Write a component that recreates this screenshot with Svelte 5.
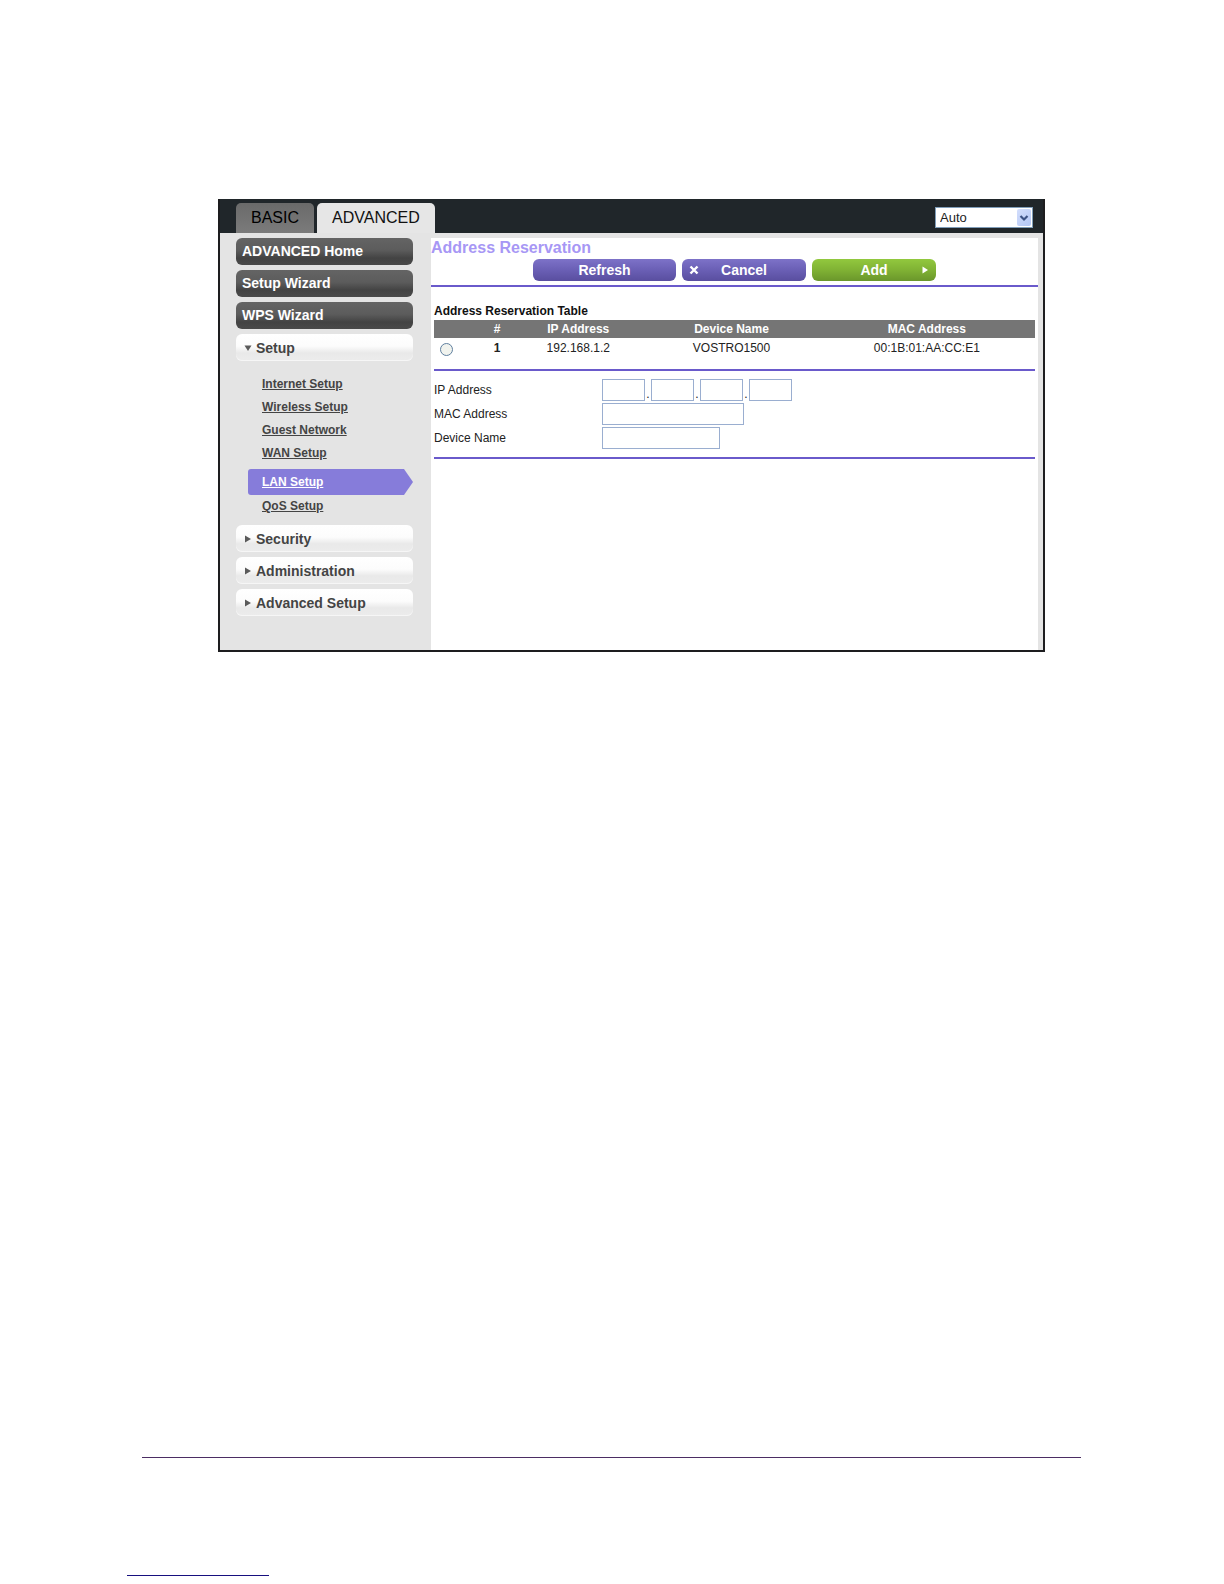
<script>
  const quickLinks = ['ADVANCED Home', 'Setup Wizard', 'WPS Wizard'];
  const setupLinks = ['Internet Setup', 'Wireless Setup', 'Guest Network', 'WAN Setup', 'LAN Setup', 'QoS Setup'];
  const sections = ['Security', 'Administration', 'Advanced Setup'];
  const rows = [{ id: 1, ip: '192.168.1.2', device: 'VOSTRO1500', mac: '00:1B:01:AA:CC:E1' }];
  const octets = [1, 2, 3, 4];
  let current = $state('LAN Setup');
  let setupOpen = $state(true);
</script>

<div class="page">
  <div class="window">
    <header class="topbar">
      <nav class="tabs" aria-label="Mode">
        <button type="button" class="tab">BASIC</button>
        <button type="button" class="tab active">ADVANCED</button>
      </nav>
      <div class="language">
        <select aria-label="Language">
          <option>Auto</option>
        </select>
        <span class="drop">
          <svg width="10" height="8" viewBox="0 0 10 8" aria-hidden="true"><path d="M1.5 2 5 5.500 8.500 2" fill="none" stroke="#3d5385" stroke-width="2.2" /></svg>
        </span>
      </div>
    </header>

    <div class="body">
      <aside class="sidebar">
        {#each quickLinks as label}
          <button type="button" class="nav dark">{label}</button>
        {/each}
        <button type="button" class="nav light" aria-expanded={setupOpen} onclick={() => (setupOpen = !setupOpen)}>
          <svg width="8" height="8" viewBox="0 0 8 8" aria-hidden="true"><path d={setupOpen ? 'M0.5 1.500h7L4 7z' : 'M1 0.500v7L7 4z'} fill="#5a5a5a" /></svg>
          Setup
        </button>
        {#if setupOpen}
          <ul class="sub">
            {#each setupLinks as label}
              <li class:current={label === current}>
                <a href="#setup" onclick={() => (current = label)}>{label}</a>
              </li>
            {/each}
          </ul>
        {/if}
        {#each sections as label}
          <button type="button" class="nav light">
            <svg width="8" height="8" viewBox="0 0 8 8" aria-hidden="true"><path d="M1 0.500v7L7 4z" fill="#5a5a5a" /></svg>
            {label}
          </button>
        {/each}
      </aside>

      <main class="content">
        <h1>Address Reservation</h1>
        <div class="actions">
          <button type="button" class="action wide">Refresh</button>
          <button type="button" class="action">
            <svg class="cross" width="10" height="10" viewBox="0 0 10 10" aria-hidden="true"><path d="M1.500 1.500l7 7M8.500 1.500l-7 7" stroke="#fff" stroke-width="2.4" /></svg>
            Cancel
          </button>
          <button type="button" class="action green">
            Add
            <svg class="play" width="6" height="8" viewBox="0 0 6 8" aria-hidden="true"><path d="M0.500 0.500v7L6 4z" fill="#fff" /></svg>
          </button>
        </div>

        <form class="form">
          <table>
            <caption>Address Reservation Table</caption>
            <thead>
              <tr>
                <th class="pick"></th>
                <th class="num">#</th>
                <th class="ip">IP Address</th>
                <th class="device">Device Name</th>
                <th>MAC Address</th>
              </tr>
            </thead>
            <tbody>
              {#each rows as row}
                <tr>
                  <td class="pick"><input type="radio" name="entry" aria-label="Select {row.device}" /></td>
                  <td><b>{row.id}</b></td>
                  <td>{row.ip}</td>
                  <td>{row.device}</td>
                  <td>{row.mac}</td>
                </tr>
              {/each}
            </tbody>
          </table>

          <div class="fields">
            <div class="field">
              <label for="ip1">IP Address</label>
              <div class="octets">
                {#each octets as n}
                  <input id="ip{n}" type="text" maxlength="3" aria-label={n > 1 ? `IP Address part ${n}` : undefined} />
                  {#if n < octets.length}<span>.</span>{/if}
                {/each}
              </div>
            </div>
            <div class="field">
              <label for="mac">MAC Address</label>
              <input id="mac" class="mac" type="text" />
            </div>
            <div class="field">
              <label for="device">Device Name</label>
              <input id="device" class="name" type="text" />
            </div>
          </div>
        </form>
      </main>
    </div>
  </div>

  <footer>
    <hr />
    <a href="#top" class="source" aria-label="Source"></a>
  </footer>
</div>

<style>
  :global(body) {
    margin: 0;
    background: #fff;
  }

  .page {
    box-sizing: border-box;
    min-height: 100vh;
    display: flex;
    flex-direction: column;
    justify-content: space-between;
    padding: 199px 0 8px;
    font-family: 'Liberation Sans', Arial, sans-serif;
    font-size: 12px;
    color: #222;
  }

  button,
  input,
  select {
    box-sizing: border-box;
    font-family: inherit;
    margin: 0;
  }

  .window {
    margin: 0 179px 0 218px;
    border: 2px solid #1d1d1f;
    border-top: 0;
    background: #e4e4e4;
  }

  .topbar {
    display: flex;
    justify-content: space-between;
    align-items: flex-end;
    height: 34px;
    padding: 0 10px 0 16px;
    background: #20262a;
  }

  .tabs {
    display: flex;
    gap: 3px;
  }

  .tab {
    height: 30px;
    padding: 0 15px;
    border: 0;
    border-radius: 5px 5px 0 0;
    background: linear-gradient(#6a6a6a, #7b7b7b);
    font-size: 16px;
    color: #000;
  }

  .tab.active {
    background: #e6e6e6;
    color: #111;
  }

  .language {
    position: relative;
    margin-bottom: 5px;
  }

  .language select {
    display: block;
    appearance: none;
    width: 98px;
    height: 21px;
    padding: 0 4px;
    border: 1px solid #7f9db9;
    border-radius: 0;
    background: #fff;
    font-size: 13px;
    color: #222;
  }

  .drop {
    position: absolute;
    top: 2px;
    right: 2px;
    bottom: 2px;
    width: 14px;
    display: grid;
    place-items: center;
    border-radius: 2px;
    background: linear-gradient(135deg, #d3defc, #b3c6f5);
    pointer-events: none;
  }

  .body {
    display: flex;
    min-height: 417px;
    padding-right: 5px;
  }

  .sidebar {
    box-sizing: border-box;
    flex: 0 0 211px;
    display: flex;
    flex-direction: column;
    gap: 5px;
    padding: 5px 18px 0 16px;
  }

  .nav {
    display: flex;
    align-items: center;
    flex: none;
    height: 27px;
    border: 0;
    border-radius: 6px;
    font-size: 14px;
    font-weight: bold;
    text-align: left;
  }

  .dark {
    padding: 0 6px 2px;
    background: linear-gradient(#646464, #5c5c5c 45%, #434343 75%, #4a4a4a);
    color: #fff;
  }

  .light {
    gap: 4px;
    padding: 0 8px;
    background: linear-gradient(#fff, #fcfcfc 45%, #e9e9e9 70%, #ececec);
    box-shadow: inset 0 -1px #f6f6f6;
    color: #444;
  }

  .sub {
    list-style: none;
    margin: 0;
    padding: 7px 0 2px 12px;
  }

  .sub li {
    height: 23px;
    padding-left: 14px;
    line-height: 23px;
    font-weight: bold;
  }

  .sub a {
    color: #444;
  }

  .sub li.current {
    height: 26px;
    margin-top: 4px;
    line-height: 26px;
    border-radius: 3px 0 0 3px;
    background: #867cda;
    clip-path: polygon(0 0, calc(100% - 9px) 0, 100% 50%, calc(100% - 9px) 100%, 0 100%);
  }

  .sub .current a {
    color: #fff;
  }

  .content {
    flex: 1;
    min-width: 0;
    margin-top: 5px;
    background: #fff;
  }

  h1 {
    margin: 0;
    font-size: 16px;
    line-height: 20px;
    color: #a797f5;
  }

  .actions {
    display: flex;
    justify-content: center;
    gap: 6px;
    padding: 1px 0 4px;
    border-bottom: 2px solid #6a5acb;
  }

  .action {
    position: relative;
    width: 124px;
    height: 22px;
    padding: 0;
    border: 0;
    border-radius: 6px;
    background: linear-gradient(#7d72c8, #6a5fb5 50%, #594e9f);
    font-size: 14px;
    font-weight: bold;
    color: #fff;
  }

  .wide {
    width: 143px;
  }

  .green {
    background: linear-gradient(#92c83e, #80b234 50%, #6a962b);
  }

  .cross {
    position: absolute;
    left: 7px;
    top: 6px;
  }

  .play {
    position: absolute;
    right: 8px;
    top: 7px;
  }

  .form {
    margin: 0 3px;
    padding-top: 15px;
  }

  table {
    width: 100%;
    table-layout: fixed;
    border-collapse: collapse;
    text-align: center;
  }

  caption {
    height: 18px;
    line-height: 18px;
    font-weight: bold;
    text-align: left;
    color: #111;
  }

  th {
    height: 18px;
    padding: 0;
    background: #757575;
    color: #fff;
  }

  td {
    height: 20px;
    padding: 0;
  }

  .pick {
    width: 8%;
    text-align: left;
  }

  .num {
    width: 5%;
  }

  .ip {
    width: 22%;
  }

  .device {
    width: 29%;
  }

  input[type='radio'] {
    display: block;
    appearance: none;
    width: 13px;
    height: 13px;
    margin: 3px 0 0 6px;
    border: 1px solid #5f7f9f;
    border-radius: 50%;
    background: #f1f3ee;
  }

  input[type='radio']:checked {
    background: radial-gradient(#2f9a2f 35%, #f1f3ee 40%);
  }

  .fields {
    display: flex;
    flex-direction: column;
    gap: 2px;
    margin-top: 11px;
    padding: 8px 0;
    border: solid #6a5acb;
    border-width: 2px 0;
  }

  .field {
    display: flex;
    align-items: center;
  }

  .field label {
    flex: 0 0 168px;
  }

  .octets {
    display: flex;
    align-items: flex-end;
  }

  .octets span {
    width: 6px;
    text-align: center;
  }

  .field input {
    width: 43px;
    height: 22px;
    padding: 0 3px;
    border: 1px solid #9aaed0;
    background: #fff;
    font-size: 12px;
  }

  .field .mac {
    width: 142px;
  }

  .field .name {
    width: 118px;
  }

  footer {
    margin-left: 127px;
  }

  hr {
    height: 1px;
    margin: 0 143px 117px 15px;
    border: 0;
    background: #4b2d63;
  }

  .source {
    display: block;
    width: 142px;
    height: 1px;
    background: #17107f;
  }
</style>
